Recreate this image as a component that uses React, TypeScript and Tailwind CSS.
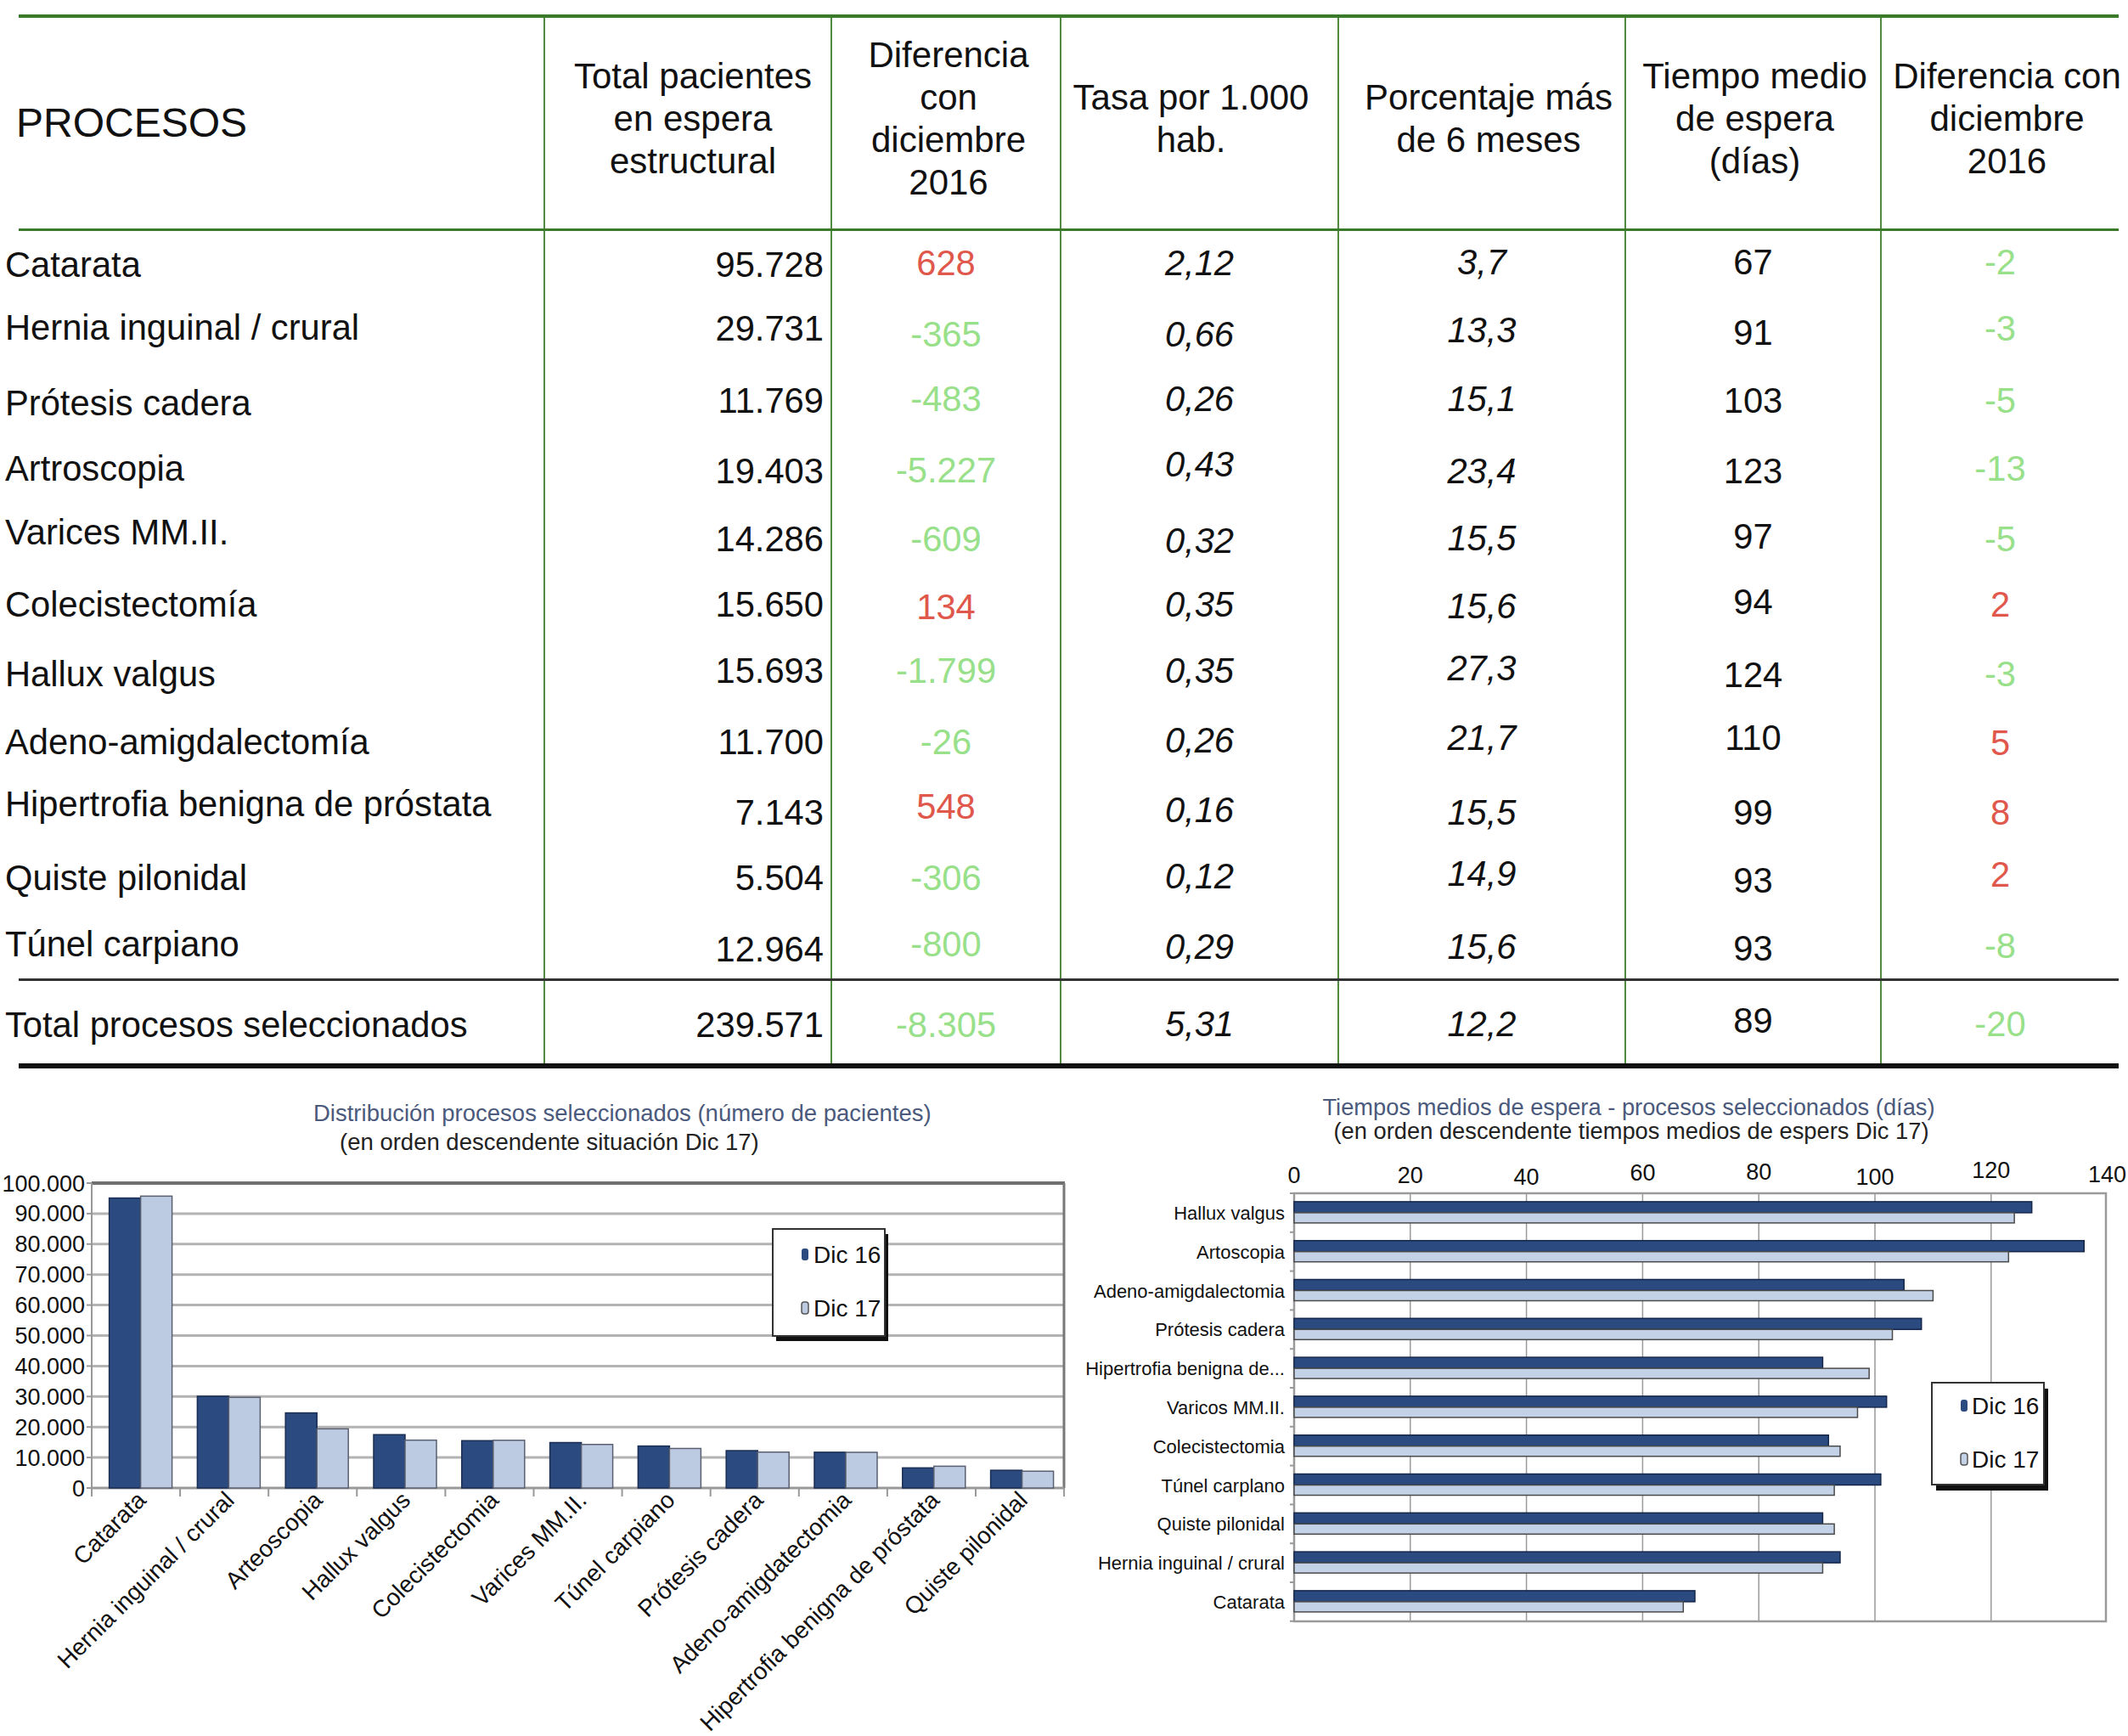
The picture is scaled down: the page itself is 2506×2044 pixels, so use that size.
import React from "react";

const COLS = "grid grid-cols-[618px_338px_270px_327px_338px_301px_281px]";
const VLINE = "border-l-2 border-[#4f8a40]";

const HEADERS = [
  { lines: ["Total pacientes", "en espera", "estructural"], pad: "pl-[12px]" },
  { lines: ["Diferencia", "con", "diciembre", "2016"], pad: "pl-[6px]" },
  { lines: ["Tasa por 1.000", "hab."], pad: "pr-[20px]" },
  { lines: ["Porcentaje más", "de 6 meses"], pad: "pl-[16px]" },
  { lines: ["Tiempo medio", "de espera", "(días)"], pad: "pl-[4px]" },
  { lines: ["Diferencia con", "diciembre", "2016"], pad: "pl-[16px]" },
];

// small vertical offsets, the source table is not perfectly aligned
const TY: Record<number, string> = {
  [-6]: "-translate-y-[6px]",
  [-5]: "-translate-y-[5px]",
  [-4]: "-translate-y-[4px]",
  [-3]: "-translate-y-[3px]",
  [-2]: "-translate-y-[2px]",
  0: "",
  2: "translate-y-[2px]",
  3: "translate-y-[3px]",
  4: "translate-y-[4px]",
  5: "translate-y-[5px]",
  6: "translate-y-[6px]",
};

const ROWS: { cells: string[]; dy: number[] }[] = [
  { cells: ["Catarata", "95.728", "628", "2,12", "3,7", "67", "-2"], dy: [0, 0, -2, -2, -3, -3, -3] },
  { cells: ["Hernia inguinal / crural", "29.731", "-365", "0,66", "13,3", "91", "-3"], dy: [-6, -5, 2, 2, -3, 0, -5] },
  { cells: ["Prótesis cadera", "11.769", "-483", "0,26", "15,1", "103", "-5"], dy: [3, 0, -2, -2, -2, 0, 0] },
  { cells: ["Artroscopia", "19.403", "-5.227", "0,43", "23,4", "123", "-13"], dy: [0, 3, 2, -5, 3, 3, 0] },
  { cells: ["Varices MM.II.", "14.286", "-609", "0,32", "15,5", "97", "-5"], dy: [-5, 3, 3, 5, 2, 0, 3] },
  { cells: ["Colecistectomía", "15.650", "134", "0,35", "15,6", "94", "2"], dy: [0, 0, 3, 0, 2, -3, 0] },
  { cells: ["Hallux valgus", "15.693", "-1.799", "0,35", "27,3", "124", "-3"], dy: [2, -2, -2, -2, -5, 3, 2] },
  { cells: ["Adeno-amigdalectomía", "11.700", "-26", "0,26", "21,7", "110", "5"], dy: [2, 2, 2, 0, -3, -3, 3] },
  { cells: ["Hipertrofia benigna de próstata", "7.143", "548", "0,16", "15,5", "99", "8"], dy: [-5, 5, -2, 2, 5, 5, 5] },
  { cells: ["Quiste pilonidal", "5.504", "-306", "0,12", "14,9", "93", "2"], dy: [2, 2, 2, 0, -3, 5, -2] },
  { cells: ["Túnel carpiano", "12.964", "-800", "0,29", "15,6", "93", "-8"], dy: [0, 6, 0, 3, 3, 5, 2] },
];

const TOTAL = {
  cells: ["Total procesos seleccionados", "239.571", "-8.305", "5,31", "12,2", "89", "-20"],
  dy: [3, 3, 3, 2, 2, -2, 2],
};

// [label, dic 16, dic 17]
const PACIENTES: [string, number, number][] = [
  ["Catarata", 95100, 95728],
  ["Hernia inguinal / crural", 30096, 29731],
  ["Arteoscopia", 24630, 19403],
  ["Hallux valgus", 17492, 15693],
  ["Colecistectomia", 15516, 15650],
  ["Varices MM.II.", 14895, 14286],
  ["Túnel carpiano", 13764, 12964],
  ["Prótesis cadera", 12252, 11769],
  ["Adeno-amigdatectomia", 11726, 11700],
  ["Hipertrofia benigna de próstata", 6595, 7143],
  ["Quiste pilonidal", 5810, 5504],
];

const TIEMPOS: [string, number, number][] = [
  ["Hallux valgus", 127, 124],
  ["Artoscopia", 136, 123],
  ["Adeno-amigdalectomia", 105, 110],
  ["Prótesis cadera", 108, 103],
  ["Hipertrofia benigna de...", 91, 99],
  ["Varicos MM.II.", 102, 97],
  ["Colecistectomia", 92, 94],
  ["Túnel carplano", 101, 93],
  ["Quiste pilonidal", 91, 93],
  ["Hernia inguinal / crural", 94, 91],
  ["Catarata", 69, 67],
];

const DARK = "#2b4a7f";
const LIGHT = "#bccbe2";

const diffColor = (v: string) => (v.startsWith("-") ? "text-[#98e08a]" : "text-[#e0574b]");

const DataRow = ({ row, className }: { row: { cells: string[]; dy: number[] }; className: string }) => {
  const c = row.cells;
  const t = row.dy.map((d) => TY[d] ?? "");
  return (
    <div className={`${COLS} ${className} text-[41.7px] leading-none`}>
      <div className="flex items-center">
        <span className={`-ml-[16px] whitespace-nowrap ${t[0]}`}>{c[0]}</span>
      </div>
      <div className={`flex items-center justify-end pr-[8px] ${VLINE}`}>
        <span className={t[1]}>{c[1]}</span>
      </div>
      <div className={`flex items-center justify-center ${VLINE} ${diffColor(c[2])}`}>
        <span className={t[2]}>{c[2]}</span>
      </div>
      <div className={`flex items-center justify-center italic ${VLINE}`}>
        <span className={t[3]}>{c[3]}</span>
      </div>
      <div className={`flex items-center justify-center italic ${VLINE}`}>
        <span className={t[4]}>{c[4]}</span>
      </div>
      <div className={`flex items-center justify-center ${VLINE}`}>
        <span className={t[5]}>{c[5]}</span>
      </div>
      <div className={`flex items-center justify-center ${VLINE} ${diffColor(c[6])}`}>
        <span className={t[6]}>{c[6]}</span>
      </div>
    </div>
  );
};

const Table = () => (
  <div className="pt-[17px] pl-[22px]">
    <div className="w-[2473px]">
      <div className={`${COLS} h-[255px] border-t-4 border-b-[3px] border-[#3a7a2a]`}>
        <div className="flex items-center">
          <span className="-ml-[3px] text-[48px] leading-none">PROCESOS</span>
        </div>
        {HEADERS.map((h, i) => (
          <div
            key={i}
            className={`flex items-center justify-center pb-[11px] text-center text-[42px] leading-[50px] ${h.pad} ${VLINE}`}
          >
            <div>
              {h.lines.map((l) => (
                <div key={l} className="whitespace-nowrap">{l}</div>
              ))}
            </div>
          </div>
        ))}
      </div>
      {ROWS.map((r) => (
        <DataRow key={r.cells[0]} row={r} className="h-[80px]" />
      ))}
      <DataRow row={TOTAL} className="h-[106px] border-t-[3px] border-b-[6px] border-t-[#333] border-b-[#111]" />
    </div>
  </div>
);

const PacientesChart = () => {
  const y = (v: number) => 1752 - v * 0.00359;
  return (
    <svg width={1260} height={786} viewBox="0 1258 1260 786">
      <text x={369} y={1320} fontSize={27.5} fill="#4b5a7c">
        Distribución procesos seleccionados (número de pacientes)
      </text>
      <text x={400} y={1354} fontSize={27.5} fill="#222">
        (en orden descendente situación Dic 17)
      </text>

      {Array.from({ length: 9 }, (_, k) => (
        <line key={k} x1={108} x2={1253} y1={y((k + 1) * 10000)} y2={y((k + 1) * 10000)} stroke="#b3b3b3" strokeWidth={3} />
      ))}
      <line x1={108} x2={1254} y1={1393} y2={1393} stroke="#6f6f6f" strokeWidth={4} />
      <line x1={1253} x2={1253} y1={1393} y2={1752} stroke="#777" strokeWidth={3} />
      <line x1={108} x2={1253} y1={1752} y2={1752} stroke="#999" strokeWidth={3} />
      <line x1={108} x2={108} y1={1393} y2={1760} stroke="#999" strokeWidth={2} />

      {Array.from({ length: 11 }, (_, k) => (
        <g key={k}>
          <line x1={102} x2={108} y1={y(k * 10000)} y2={y(k * 10000)} stroke="#999" strokeWidth={2} />
          <text x={100} y={y(k * 10000) + 9.5} fontSize={27} textAnchor="end" fill="#111">
            {k === 0 ? "0" : `${k * 10}.000`}
          </text>
        </g>
      ))}

      {Array.from({ length: 12 }, (_, i) => (
        <line key={i} x1={108 + i * 104.1} x2={108 + i * 104.1} y1={1752} y2={1762} stroke="#999" strokeWidth={2} />
      ))}

      {PACIENTES.map(([label, d16, d17], i) => {
        const x0 = 128.6 + i * 103.8;
        const ax = x0 + 45;
        const ay = 1768;
        return (
          <g key={label}>
            <rect x={x0} y={y(d16)} width={37} height={1752 - y(d16)} fill={DARK} stroke="#1a2d52" strokeWidth={1.5} />
            <rect x={x0 + 37} y={y(d17)} width={37} height={1752 - y(d17)} fill={LIGHT} stroke="#5a6070" strokeWidth={1.5} />
            <text x={ax} y={ay} fontSize={28} textAnchor="end" fill="#111" transform={`rotate(-45 ${ax} ${ay})`}>
              {label}
            </text>
          </g>
        );
      })}

      <rect x={914} y={1453} width={132} height={126} fill="#111" />
      <rect x={910} y={1447} width={132} height={126} fill="#fff" stroke="#333" strokeWidth={2} />
      <rect x={944} y={1470} width={8} height={14} rx={3} fill={DARK} />
      <text x={958} y={1487} fontSize={28} fill="#111">Dic 16</text>
      <rect x={944} y={1533} width={8} height={14} rx={3} fill={LIGHT} stroke="#555" strokeWidth={1.5} />
      <text x={958} y={1550} fontSize={28} fill="#111">Dic 17</text>
    </svg>
  );
};

const TiemposChart = () => {
  const x = (v: number) => 1524 + v * 6.84;
  const tickY = [1383, 1383, 1385, 1380, 1379, 1385, 1377, 1382];
  return (
    <svg width={1246} height={786} viewBox="1260 1258 1246 786">
      <text x={1918} y={1313} fontSize={27.3} textAnchor="middle" fill="#4b5a7c">
        Tiempos medios de espera - procesos seleccionados (días)
      </text>
      <text x={1921} y={1341} fontSize={27.3} textAnchor="middle" fill="#222">
        (en orden descendente tiempos medios de espers Dic 17)
      </text>

      {tickY.map((ty, k) => (
        <text key={k} x={x(k * 20)} y={ty + 10} fontSize={27} textAnchor="middle" fill="#111">
          {k * 20}
        </text>
      ))}

      {[20, 40, 60, 80, 100, 120].map((v) => (
        <line key={v} x1={x(v)} x2={x(v)} y1={1405} y2={1909} stroke="#9a9a9a" strokeWidth={1.5} />
      ))}
      <rect x={1524} y={1405} width={956} height={504} fill="none" stroke="#9a9a9a" strokeWidth={2.5} />
      {Array.from({ length: 12 }, (_, i) => (
        <line key={i} x1={1519} x2={1524} y1={1405 + i * 45.8} y2={1405 + i * 45.8} stroke="#999" strokeWidth={2} />
      ))}

      {TIEMPOS.map(([label, d16, d17], i) => {
        const cy = 1405 + 45.8 * (i + 0.5);
        return (
          <g key={label}>
            <rect x={1524} y={cy - 13} width={d16 * 6.84} height={13} fill={DARK} stroke="#14264a" strokeWidth={1.5} />
            <rect x={1524} y={cy} width={d17 * 6.84} height={12} fill="#c4d2e7" stroke="#4a4a4a" strokeWidth={1.5} />
            <text x={1513} y={cy + 8} fontSize={22} textAnchor="end" fill="#111">
              {label}
            </text>
          </g>
        );
      })}

      <rect x={2280} y={1635} width={132} height={120} fill="#111" />
      <rect x={2275} y={1628} width={132} height={120} fill="#fff" stroke="#333" strokeWidth={2} />
      <rect x={2309} y={1648} width={8} height={14} rx={3} fill={DARK} />
      <text x={2322} y={1665} fontSize={28} fill="#111">Dic 16</text>
      <rect x={2309} y={1711} width={8} height={14} rx={3} fill="#c4d2e7" stroke="#555" strokeWidth={1.5} />
      <text x={2322} y={1728} fontSize={28} fill="#111">Dic 17</text>
    </svg>
  );
};

export default function App() {
  return (
    <div className="h-[2044px] w-[2506px] overflow-hidden bg-white font-['Liberation_Sans',Arial,sans-serif] text-[#111]">
      <Table />
      <div className="flex h-[786px]">
        <PacientesChart />
        <TiemposChart />
      </div>
    </div>
  );
}
